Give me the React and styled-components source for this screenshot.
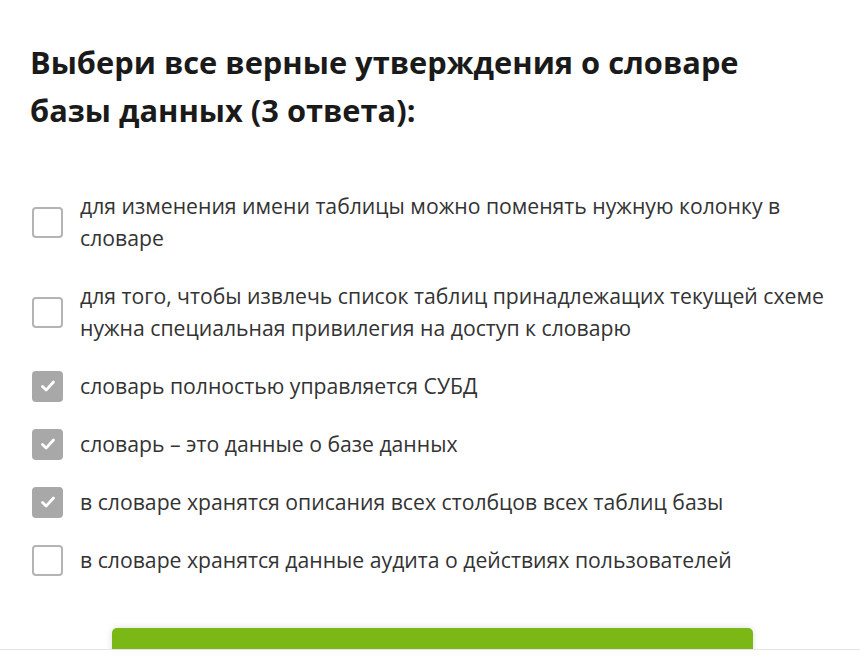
import React from 'react';
import styled, { createGlobalStyle } from 'styled-components';

const GlobalStyle = createGlobalStyle`
  body {
    margin: 0;
    background: #fff;
    font-family: "Open Sans", "Liberation Sans", sans-serif;
  }
`;

const Viewport = styled.div`
  height: 649px;
  overflow: hidden;
  border-bottom: 1px solid #e4e4e4;
`;

const Page = styled.div`
  padding: 38px 32px 0;
`;

const Title = styled.h2`
  margin: 0 0 56px -2px;
  max-width: 760px;
  font-size: 30.8px;
  font-weight: 700;
  line-height: 48px;
  color: #1a1a1a;
`;

const Options = styled.ul`
  list-style: none;
  margin: 0;
  padding: 0;
  display: flex;
  flex-direction: column;
  gap: 26px;
`;

const Option = styled.li`
  display: flex;
  align-items: center;
  gap: 17px;
  cursor: pointer;
`;

const Box = styled.span`
  flex: none;
  box-sizing: border-box;
  width: 31px;
  height: 31px;
  border-radius: 4px;
  border: 2px solid ${p => (p.checked ? '#a8a8a8' : '#b4b4b4')};
  background: ${p => (p.checked ? '#a8a8a8' : '#fff')};
  display: flex;
  align-items: center;
  justify-content: center;
`;

const Label = styled.span`
  font-size: 21.2px;
  line-height: 32px;
  color: #333;
`;

const Submit = styled.button`
  display: block;
  width: 641px;
  height: 56px;
  margin: 52px 0 0 80px;
  border: 0;
  border-radius: 5px;
  background: #7cb815;
  box-shadow: 0 0 6px rgba(0, 0, 0, 0.15);
`;

const options = [
  { text: 'для изменения имени таблицы можно поменять нужную колонку в словаре', checked: false },
  { text: 'для того, чтобы извлечь список таблиц принадлежащих текущей схеме нужна специальная привилегия на доступ к словарю', checked: false },
  { text: 'словарь полностью управляется СУБД', checked: true },
  { text: 'словарь – это данные о базе данных', checked: true },
  { text: 'в словаре хранятся описания всех столбцов всех таблиц базы', checked: true },
  { text: 'в словаре хранятся данные аудита о действиях пользователей', checked: false },
];

const Check = () => (
  <svg width="18" height="18" viewBox="0 0 18 18">
    <path d="M3.5 9.5l3.6 3.6L14.5 5" fill="none" stroke="#fff" strokeWidth="2.8" strokeLinecap="round" strokeLinejoin="round" />
  </svg>
);

export default function App() {
  return (
    <Viewport>
      <GlobalStyle />
      <Page>
        <Title>Выбери все верные утверждения о словаре базы данных (3 ответа):</Title>
        <Options>
          {options.map(o => (
            <Option key={o.text}>
              <Box checked={o.checked}>{o.checked && <Check />}</Box>
              <Label>{o.text}</Label>
            </Option>
          ))}
        </Options>
        <Submit type="button" />
      </Page>
    </Viewport>
  );
}
